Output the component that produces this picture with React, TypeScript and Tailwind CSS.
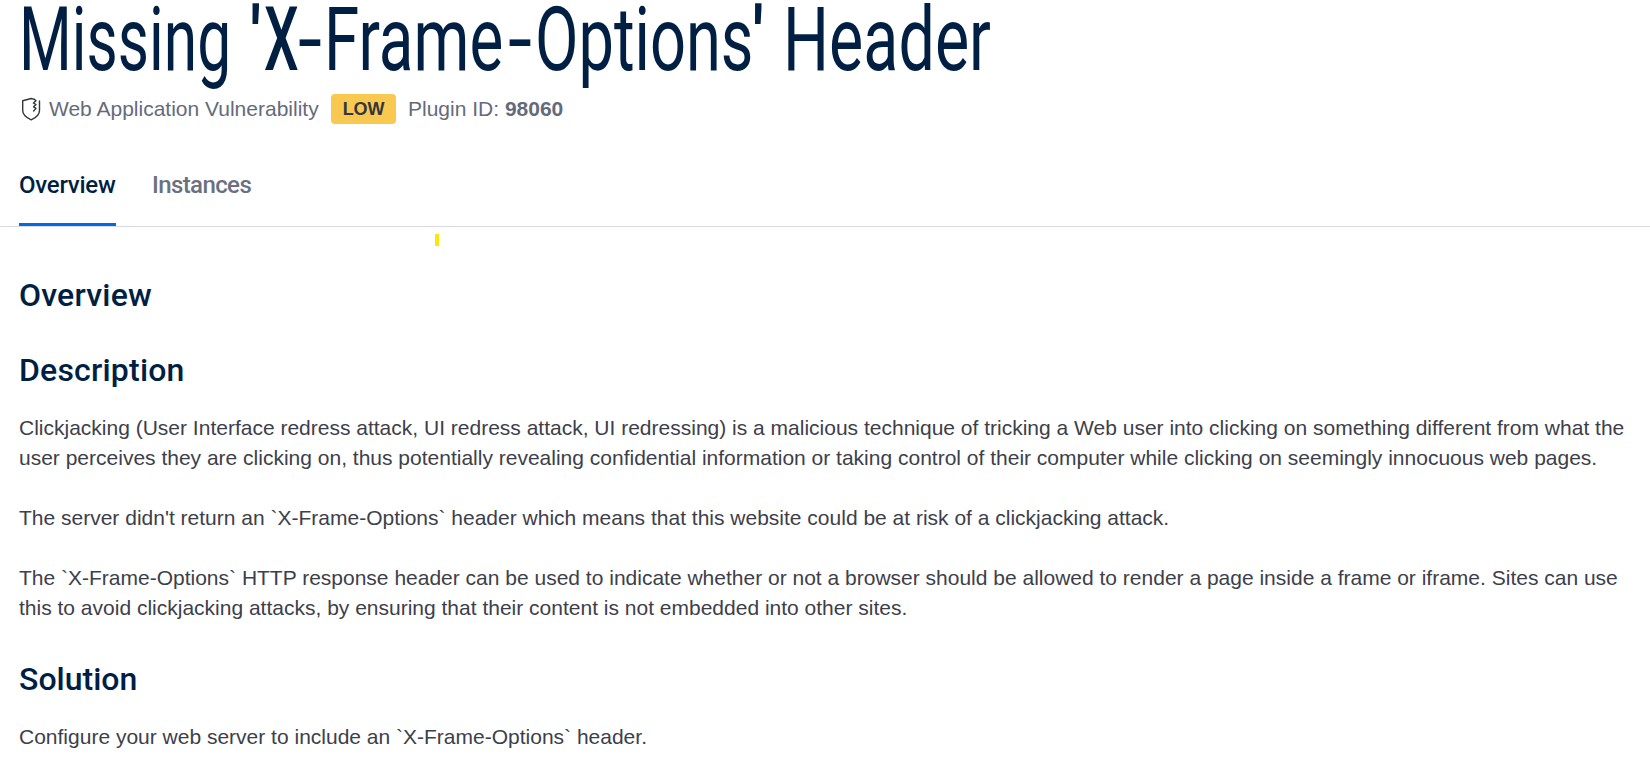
import type { ReactNode } from "react";

function Word({ children, box, scale }: { children: string; box: string; scale: string }) {
  return (
    <span className={`inline-block whitespace-nowrap ${box}`}>
      <span className={`inline-block origin-left ${scale}`}>{children}</span>
    </span>
  );
}

function Heading({ children, className }: { children: string; className: string }) {
  return (
    <h2 className={`font-['Roboto',sans-serif] text-[32px] leading-10 font-[550] text-[#001f43] ${className}`}>
      {children}
    </h2>
  );
}

function Paragraph({ children, className = "" }: { children: ReactNode; className?: string }) {
  return (
    <p className={`text-[21px] leading-[30px] whitespace-nowrap text-[#3d404a] ${className}`}>
      {children}
    </p>
  );
}

function ShieldIcon() {
  return (
    <svg
      className="h-6 w-5 shrink-0"
      viewBox="0 0 20 24"
      fill="none"
      stroke="#33363f"
      strokeWidth="1.4"
      strokeLinecap="round"
      strokeLinejoin="round"
    >
      <path d="M13.3 2.4 10.2 1.5 1.7 3.7V13.5C1.7 18.2 5.6 20.8 10.2 22.8C14.8 20.8 18.5 18.2 18.5 13.5V3.9" />
      <path d="M13.3 2.4 15 3.8 12.4 6 15 7.6 12.6 9.8 15 11.4 12.6 14" />
    </svg>
  );
}

export default function App() {
  return (
    <div className="flex h-[765px] w-[1650px] flex-col overflow-hidden bg-white font-['Liberation_Sans',Arial,sans-serif]">
      <h1 className="h-20 pl-[19px] font-['Roboto',sans-serif] text-[88.6px] leading-[80px] font-normal whitespace-nowrap text-[#001f43]">
        <Word box="w-[207px]" scale="scale-x-[0.683]">Missing</Word>{" "}
        <Word box="w-[16px]" scale="scale-x-100">'</Word>
        <Word box="w-[34px]" scale="scale-x-[0.62] font-medium">X</Word>
        <Word box="w-[26px]" scale="scale-x-[0.98]">-</Word>
        <Word box="w-[184px]" scale="scale-x-[0.72]">Frame</Word>
        <Word box="w-[27px]" scale="scale-x-[0.98]">-</Word>
        <Word box="w-[215.5px]" scale="scale-x-[0.713]">Options</Word>
        <Word box="w-[11px]" scale="scale-x-100">'</Word>{" "}
        <Word box="w-[210px]" scale="scale-x-[0.729]">Header</Word>
      </h1>

      <div className="mt-3.5 flex h-[30px] items-center pl-[21px] text-[21px] leading-[30px] text-[#656a7b]">
        <ShieldIcon />
        <span className="ml-2 w-[282px] whitespace-nowrap">Web Application Vulnerability</span>
        <span className="h-[30px] w-[65px] rounded bg-[#f8c851] text-center text-[18px] font-bold tracking-[-0.2px] text-[#33363f]">
          LOW
        </span>
        <span className="ml-3 whitespace-nowrap">
          Plugin ID: <strong>98060</strong>
        </span>
      </div>

      <nav className="mt-[46px] flex h-[57px] gap-[35px] border-b border-[#d9d9e3] pl-[19px] font-['Roboto',sans-serif] text-[24px] leading-[30px] font-medium">
        <a className="w-[97px] border-b-[3px] border-[#006bdf] tracking-[-0.25px] whitespace-nowrap text-[#001f43]">Overview</a>
        <a className="pl-px font-medium tracking-[-0.6px] text-[#6b7080]">Instances</a>
      </nav>

      <div className="mt-[7px] ml-[435px] h-3 w-1 bg-[#ffe600]" />

      <main className="mt-[29px] pl-[19px]">
        <Heading className="tracking-[0.2px]">Overview</Heading>
        <Heading className="mt-[35px] tracking-[0.2px]">Description</Heading>
        <Paragraph className="mt-[23px]">
          Clickjacking (User Interface redress attack, UI redress attack, UI redressing) is a malicious technique of
          tricking a Web user into clicking on something different from what the
          <br />
          user perceives they are clicking on, thus potentially revealing confidential information or taking control of
          their computer while clicking on seemingly innocuous web pages.
        </Paragraph>
        <Paragraph className="mt-[30px]">
          The server didn't return an `X-Frame-Options` header which means that this website could be at risk of a
          clickjacking attack.
        </Paragraph>
        <Paragraph className="mt-[30px]">
          The `X-Frame-Options` HTTP response header can be used to indicate whether or not a browser should be allowed
          to render a page inside a frame or iframe. Sites can use
          <br />
          this to avoid clickjacking attacks, by ensuring that their content is not embedded into other sites.
        </Paragraph>
        <Heading className="mt-9">Solution</Heading>
        <Paragraph className="mt-[23px]">
          Configure your web server to include an `X-Frame-Options` header.
        </Paragraph>
      </main>
    </div>
  );
}
